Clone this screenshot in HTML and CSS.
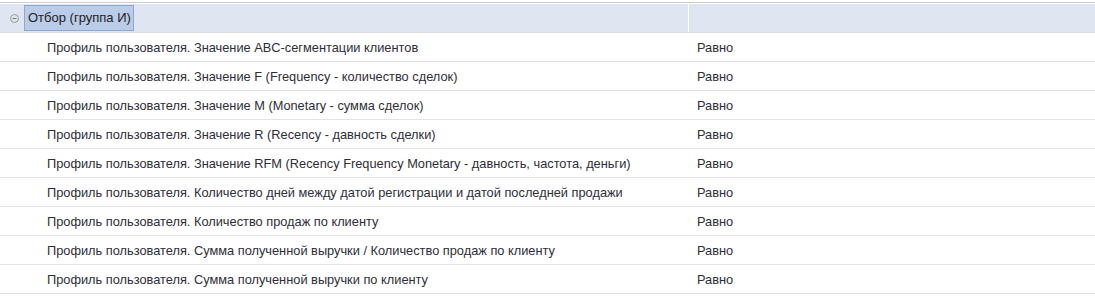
FILE: index.html
```html
<!DOCTYPE html>
<html lang="ru">
<head>
    <meta charset="UTF-8">
    <title>Отбор</title>
    <link rel="stylesheet" href="styles.css">
</head>
<body>
    <div class="grid">
        <div class="row group">
            <div class="cell name">
                <svg class="toggle" width="9" height="9" viewBox="0 0 9 9">
                    <circle cx="4.5" cy="4.5" r="4" fill="none" stroke="#9a9a9a" stroke-width="1"/>
                    <line x1="2.5" y1="4.5" x2="6.5" y2="4.5" stroke="#7a7a7a" stroke-width="1"/>
                </svg>
                <span class="group-label">Отбор (группа И)</span>
            </div>
            <div class="cell value"></div>
        </div>
        <div class="row"><div class="cell name">Профиль пользователя. Значение ABC-сегментации клиентов</div><div class="cell value">Равно</div></div>
        <div class="row"><div class="cell name">Профиль пользователя. Значение F (Frequency - количество сделок)</div><div class="cell value">Равно</div></div>
        <div class="row"><div class="cell name">Профиль пользователя. Значение M (Monetary - сумма сделок)</div><div class="cell value">Равно</div></div>
        <div class="row"><div class="cell name">Профиль пользователя. Значение R (Recency - давность сделки)</div><div class="cell value">Равно</div></div>
        <div class="row"><div class="cell name">Профиль пользователя. Значение RFM (Recency Frequency Monetary - давность, частота, деньги)</div><div class="cell value">Равно</div></div>
        <div class="row"><div class="cell name">Профиль пользователя. Количество дней между датой регистрации и датой последней продажи</div><div class="cell value">Равно</div></div>
        <div class="row"><div class="cell name">Профиль пользователя. Количество продаж по клиенту</div><div class="cell value">Равно</div></div>
        <div class="row"><div class="cell name">Профиль пользователя. Сумма полученной выручки / Количество продаж по клиенту</div><div class="cell value">Равно</div></div>
        <div class="row"><div class="cell name">Профиль пользователя. Сумма полученной выручки по клиенту</div><div class="cell value">Равно</div></div>
    </div>
</body>
</html>
```

FILE: styles.css
```css
html,
body {
    margin: 0;
    background: #fff;
}

.grid {
    font-family: 'Liberation Sans', Arial, sans-serif;
    font-size: 12.8px;
    color: #2e2e38;
    padding-top: 2px;
}

.row {
    display: grid;
    grid-template-columns: 688px 1fr;
    column-gap: 1px;
    height: 28px;
    border-bottom: 1px solid #e3e3e3;
    align-items: center;
}

.cell.name {
    padding-left: 47px;
    white-space: nowrap;
}

.cell.value {
    padding-left: 8px;
}

/* group header */
.row.group {
    height: 29px;
    border-top: 1px solid #cdcdcd;
    border-bottom: 1px solid #dcdcdc;
    background: #fff;
    align-items: stretch;
}

.row.group .cell {
    background: #dfe6f1;
    margin-top: 1px;
}

.row.group .cell.name {
    padding-left: 10px;
    display: flex;
    align-items: center;
    gap: 5px;
}

.toggle {
    flex: none;
}

.group-label {
    font-size: 13px;
    color: #222;
    background: #bacce8;
    border: 1px solid #8da6d2;
    padding: 4px 2px 4px 3px;
    line-height: 16px;
}
```
